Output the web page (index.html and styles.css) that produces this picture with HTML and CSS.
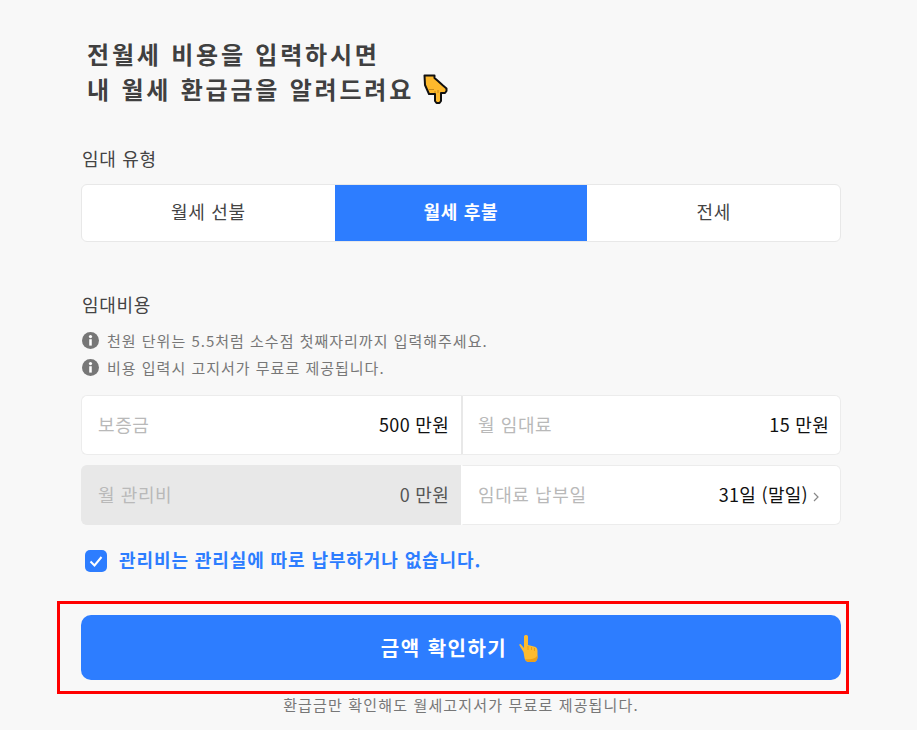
FILE: index.html
```html
<!DOCTYPE html>
<html lang="ko">

<head>
    <meta charset="UTF-8">
    <meta name="viewport" content="width=device-width, initial-scale=1.0">
    <title>월세 환급금</title>
    <link rel="stylesheet" href="styles.css">
</head>

<body>
    <div class="page">
        <h1 class="title">
            <span class="title-line">전월세 비용을 입력하시면</span>
            <span class="title-line">내 월세 환급금을 알려드려요
                <svg class="hand-down" viewBox="0 0 25 30" width="25" height="30">
                    <path d="M1.500 1.500H11.500V4L15 7L20 11.500L23.500 14.500V17L22 19H18V27L16.500 29H13.500L12 27V20H6L2 11Z" fill="#fdb92d" stroke="#111" stroke-width="2" stroke-linejoin="round"/>
                    <path d="M5.500 15.500H11M12 17V19M15 16V19" fill="none" stroke="#c98a1a" stroke-width="1"/>
                </svg>
            </span>
        </h1>

        <div class="label type-label">임대 유형</div>
        <div class="tabs">
            <div class="tab">월세 선불</div>
            <div class="tab tab-on">월세 후불</div>
            <div class="tab">전세</div>
        </div>

        <div class="label cost-label">임대비용</div>
        <p class="info">
            <svg class="info-icon" viewBox="0 0 16 16" width="17" height="17"><circle cx="8" cy="8" r="8" fill="#777"/><rect x="6.800" y="6.800" width="2.400" height="6" fill="#fff"/><circle cx="8" cy="4.300" r="1.500" fill="#fff"/></svg>
            천원 단위는 5.5처럼 소수점 첫째자리까지 입력해주세요.
        </p>
        <p class="info">
            <svg class="info-icon" viewBox="0 0 16 16" width="17" height="17"><circle cx="8" cy="8" r="8" fill="#777"/><rect x="6.800" y="6.800" width="2.400" height="6" fill="#fff"/><circle cx="8" cy="4.300" r="1.500" fill="#fff"/></svg>
            비용 입력시 고지서가 무료로 제공됩니다.
        </p>

        <div class="row row-first">
            <div class="field field-left">
                <span class="ph">보증금</span>
                <span class="val">500 만원</span>
            </div>
            <div class="field field-right">
                <span class="ph">월 임대료</span>
                <span class="val">15 만원</span>
            </div>
        </div>
        <div class="row">
            <div class="field field-left field-off">
                <span class="ph">월 관리비</span>
                <span class="val">0 만원</span>
            </div>
            <div class="field field-right field-date">
                <span class="ph">임대료 납부일</span>
                <span class="val">31일 (말일)<svg class="arrow" viewBox="0 0 6 10" width="6" height="10"><path d="M1 1L5 5L1 9" fill="none" stroke="#888" stroke-width="1.200"/></svg></span>
            </div>
        </div>

        <label class="check">
            <span class="box">
                <svg viewBox="0 0 22 22" width="22" height="22"><path d="M5.500 11.500L9.500 15.500L16.500 7" fill="none" stroke="#fff" stroke-width="2"/></svg>
            </span>
            <span class="check-text">관리비는 관리실에 따로 납부하거나 없습니다.</span>
        </label>

        <div class="btn-wrap">
            <button class="btn">금액 확인하기
                <svg class="hand-up" viewBox="0 0 22 28" width="22" height="28">
                    <path d="M5 2.500C5 0.500 9 0.500 9 2.500V11L15 12.500C17.500 13 18.500 14.500 18.500 17V23C18.500 26 17 28 14 28H10C7.500 28 6 26.500 5.500 24L4.500 18L0.500 11.500C0 10.500 1 9.500 2 10.500L5 14Z" fill="#fcbb30"/>
                    <path d="M9 12V16M12.500 13V16M15.500 14V17" fill="none" stroke="#e8a01a" stroke-width="1"/>
                    <path d="M6 25C7 27 8.500 28 10 28H14C17 28 18.500 26 18.500 23V21C17 25 11 26 6 25Z" fill="#eb9f1b"/>
                </svg>
            </button>
            <div class="red-box"></div>
        </div>
        <p class="foot">환급금만 확인해도 월세고지서가 무료로 제공됩니다.</p>
    </div>
</body>

</html>
```

FILE: styles.css
```css
* {
    margin: 0;
    padding: 0;
    box-sizing: border-box;
}

body {
    background: #f8f8f8;
    font-family: "Noto Sans CJK KR", "Noto Sans", sans-serif;
    color: #333;
    overflow: hidden;
}

.page {
    height: 730px;
    padding: 36px 76px 0 81px;
}

.title {
    padding-left: 6px;
    font-size: 24px;
    font-weight: 700;
    line-height: 35px;
    letter-spacing: 2.800px;
    color: #404040;
}

.title-line {
    display: flex;
    align-items: center;
    height: 35px;
}

.hand-down {
    margin-left: 9px;
}

.label {
    padding-left: 1px;
    font-size: 18px;
    line-height: 26px;
    letter-spacing: 0.700px;
    color: #444;
}

.type-label {
    margin-top: 39px;
}

.tabs {
    display: grid;
    grid-template-columns: 1fr 1fr 1fr;
    height: 58px;
    margin-top: 13px;
    background: #fff;
    border: 1px solid #e8e8e8;
    border-radius: 6px;
    overflow: hidden;
}

.tab {
    display: flex;
    align-items: center;
    justify-content: center;
    padding-bottom: 5px;
    font-size: 18px;
    letter-spacing: 0.700px;
    color: #444;
}

.tab-on {
    background: #2d7dff;
    color: #fff;
    font-weight: 700;
}

.cost-label {
    margin-top: 49px;
}

.info {
    display: flex;
    align-items: center;
    gap: 8px;
    height: 27px;
    padding: 0 0 2px 1px;
    font-size: 15px;
    letter-spacing: 1px;
    color: #777;
}

.cost-label + .info {
    margin-top: 11px;
}

.row {
    display: grid;
    grid-template-columns: 1fr 1fr;
    height: 60px;
    margin-top: 10px;
}

.row-first {
    margin-top: 13px;
}

.field {
    display: flex;
    align-items: center;
    justify-content: space-between;
    padding: 0 12px 2px 16px;
    background: #fff;
    border: 1px solid #ececec;
    font-size: 18px;
    letter-spacing: 0.600px;
}

.field-left {
    border-radius: 6px 0 0 6px;
    border-right-width: 0;
}

.field-right {
    border-radius: 0 6px 6px 0;
    border-left: 2px solid #e8e8e8;
    padding-left: 15px;
    padding-right: 11px;
}

.field-off {
    background: #e8e8e8;
    border-color: #e8e8e8;
}

.field-off .val {
    color: #555;
}

.field-date {
    border-left-color: #fff;
    padding-right: 21px;
}

.ph {
    color: #b9b9b9;
}

.val {
    color: #111;
    letter-spacing: 0.300px;
}

.arrow {
    margin-left: 5px;
}

.check {
    display: flex;
    align-items: center;
    gap: 12px;
    margin: 21px 0 0 4px;
    font-size: 18px;
    font-weight: 700;
    letter-spacing: 0.900px;
    color: #2d7dff;
}

.check-text {
    padding-bottom: 3px;
}

.box {
    width: 22px;
    height: 22px;
    border-radius: 5px;
    background: #2d7dff;
}

.btn-wrap {
    position: relative;
    margin-top: 40px;
}

.btn {
    display: flex;
    align-items: center;
    justify-content: center;
    gap: 12px;
    width: 100%;
    height: 65px;
    border: none;
    border-radius: 10px;
    background: #2d7dff;
    color: #fff;
    font-family: inherit;
    font-size: 20px;
    font-weight: 700;
    letter-spacing: 1.500px;
}

.red-box {
    position: absolute;
    top: -14px;
    left: -24px;
    width: 792px;
    height: 93px;
    border: 3px solid #f00;
}

.foot {
    margin-top: 14px;
    font-size: 15px;
    line-height: 22px;
    letter-spacing: 1.150px;
    text-align: center;
    color: #777;
}
```
